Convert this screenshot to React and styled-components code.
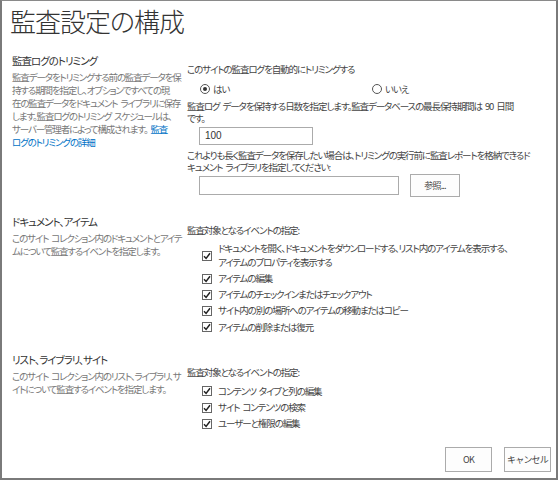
import React from 'react';
import styled, { createGlobalStyle } from 'styled-components';

const GlobalStyle = createGlobalStyle`
  html, body {
    margin: 0;
    padding: 0;
    background: #ffffff;
  }
  body {
    font-family: "Noto Sans CJK JP", "Noto Sans", sans-serif;
    font-feature-settings: "palt";
  }
`

const Page = styled.div`
  box-sizing: border-box;
  width: 558px;
  height: 480px;
  border-top: 1px solid #8a8a8a;
  border-left: 2px solid #7a7a7a;
  border-right: 2px solid #7a7a7a;
  border-bottom: 2px solid #7a7a7a;
  padding: 0 0 0 8px;
  display: flex;
  flex-direction: column;
`

const Title = styled.h1`
  margin: 2px 0 0 0;
  font-size: 26px;
  line-height: 36px;
  font-weight: 300;
  color: #333333;
  letter-spacing: -1px;
`

const Section = styled.section`
  display: grid;
  grid-template-columns: 177px 1fr;
  margin-top: ${p => p.$top}px;
`

const Side = styled.div`
  padding-left: 2px;
  padding-right: 5px;
`

const SideHeading = styled.h2`
  margin: 0 0 3px 0;
  font-size: 10.5px;
  line-height: 14px;
  font-weight: 400;
  color: #333333;
  letter-spacing: -1px;
`

const SideText = styled.p`
  margin: 0;
  font-size: 9.5px;
  line-height: 13px;
  color: #777777;
  letter-spacing: -1.15px;
  word-spacing: 2px;
`

const Link = styled.a`
  color: #0072c6;
  text-decoration: none;
  &:hover { text-decoration: underline; }
`

const Main = styled.div`
  padding-top: ${p => p.$top || 9}px;
  padding-right: 16px;
`

const Label = styled.div`
  font-size: 9.5px;
  line-height: 12.5px;
  color: #444444;
  letter-spacing: -1.1px;
  word-spacing: 2px;
`

const RadioRow = styled.div`
  display: grid;
  grid-template-columns: 172px 1fr;
  padding-left: 13px;
  margin: 6px 0 4px;
`

const RadioOption = styled.label`
  display: flex;
  align-items: center;
  gap: 3px;
  font-size: 9.5px;
  line-height: 14px;
  color: #444444;
  letter-spacing: -1px;
`

const RadioDot = styled.span`
  box-sizing: border-box;
  width: 10px;
  height: 10px;
  border-radius: 50%;
  border: 1px solid #555555;
  display: inline-flex;
  align-items: center;
  justify-content: center;
  &::after {
    content: "";
    width: 4px;
    height: 4px;
    border-radius: 50%;
    background: ${p => (p.$on ? '#333333' : 'transparent')};
  }
`

const TextBox = styled.div`
  box-sizing: border-box;
  width: ${p => p.$w}px;
  height: ${p => p.$h || 18}px;
  border: 1px solid #ababab;
  background: #ffffff;
  font-family: "Liberation Sans", Arial, sans-serif;
  font-size: 10px;
  line-height: 16px;
  padding-left: 5px;
  color: #333333;
`

const FieldBox = styled.div`
  padding-left: 12px;
  margin: 2px 0 4px;
`

const BrowseRow = styled.div`
  display: flex;
  align-items: center;
  gap: 11px;
  padding-left: 12px;
`

const Button = styled.button`
  box-sizing: border-box;
  width: ${p => p.$w || 47}px;
  height: ${p => p.$h || 25}px;
  border: 1px solid #ababab;
  background: #fdfdfd;
  color: #444444;
  font-family: "Noto Sans CJK JP", "Noto Sans", sans-serif;
  font-size: 9px;
  letter-spacing: -0.8px;
  padding: 0;
`

const CheckList = styled.div`
  display: flex;
  flex-direction: column;
  gap: 2.8px;
  padding-left: 15px;
  margin-top: 6px;
`

const CheckItem = styled.label`
  display: flex;
  align-items: center;
  gap: 6px;
  font-size: 9.5px;
  line-height: 13.5px;
  color: #444444;
  letter-spacing: -1.1px;
  word-spacing: 2px;
`

const Box = styled.span`
  box-sizing: border-box;
  flex: 0 0 auto;
  width: 10px;
  height: 10px;
  border: 1px solid #666666;
  background: #ffffff;
  display: inline-flex;
  align-items: center;
  justify-content: center;
`

const Footer = styled.div`
  margin-top: auto;
  display: flex;
  justify-content: flex-end;
  gap: 12px;
  padding: 0 5px 6px 0;
`

const Check = ({ children }) => (
  <CheckItem>
    <Box>
      <svg width="8" height="8" viewBox="0 0 8 8">
        <path d="M1 4.2 L3.1 6.4 L7 1.3" fill="none" stroke="#222" strokeWidth="1.5" />
      </svg>
    </Box>
    <span>{children}</span>
  </CheckItem>
);

export default function App() {
  return (
    <>
      <GlobalStyle />
      <Page>
        <Title>監査設定の構成</Title>

        <Section $top={15}>
          <Side>
            <SideHeading>監査ログのトリミング</SideHeading>
            <SideText>
              監査データをトリミングする前の監査データを保<br />
              持する期間を指定し、オプションですべての現<br />
              在の監査データをドキュメント ライブラリに保存<br />
              します。監査ログのトリミング スケジュールは、<br />
              サーバー管理者によって構成されます。 <Link href="#">監査<br />ログのトリミングの詳細</Link>
            </SideText>
          </Side>
          <Main>
            <Label>このサイトの監査ログを自動的にトリミングする</Label>
            <RadioRow>
              <RadioOption><RadioDot $on />はい</RadioOption>
              <RadioOption><RadioDot />いいえ</RadioOption>
            </RadioRow>
            <Label>監査ログ データを保持する日数を指定します。監査データベースの最長保持期間は 90 日間<br />です。</Label>
            <FieldBox>
              <TextBox $w={114}>100</TextBox>
            </FieldBox>
            <Label>これよりも長く監査データを保存したい場合は、トリミングの実行前に監査レポートを格納できるド<br />キュメント ライブラリを指定してください:</Label>
            <BrowseRow>
              <TextBox $w={200} $h={19} />
              <Button $w={50} $h={23}>参照...</Button>
            </BrowseRow>
          </Main>
        </Section>

        <Section $top={18}>
          <Side>
            <SideHeading>ドキュメント、アイテム</SideHeading>
            <SideText>このサイト コレクション内のドキュメントとアイテムについて監査するイベントを指定します。</SideText>
          </Side>
          <Main>
            <Label>監査対象となるイベントの指定:</Label>
            <CheckList>
              <Check>ドキュメントを開く、ドキュメントをダウンロードする、リスト内のアイテムを表示する、<br />アイテムのプロパティを表示する</Check>
              <Check>アイテムの編集</Check>
              <Check>アイテムのチェックインまたはチェックアウト</Check>
              <Check>サイト内の別の場所へのアイテムの移動またはコピー</Check>
              <Check>アイテムの削除または復元</Check>
            </CheckList>
          </Main>
        </Section>

        <Section $top={19}>
          <Side>
            <SideHeading>リスト、ライブラリ、サイト</SideHeading>
            <SideText>このサイト コレクション内のリスト、ライブラリ、サイトについて監査するイベントを指定します。</SideText>
          </Side>
          <Main $top={13}>
            <Label>監査対象となるイベントの指定:</Label>
            <CheckList>
              <Check>コンテンツ タイプと列の編集</Check>
              <Check>サイト コンテンツの検索</Check>
              <Check>ユーザーと権限の編集</Check>
            </CheckList>
          </Main>
        </Section>

        <Footer>
          <Button>OK</Button>
          <Button>キャンセル</Button>
        </Footer>
      </Page>
    </>
  );
}
